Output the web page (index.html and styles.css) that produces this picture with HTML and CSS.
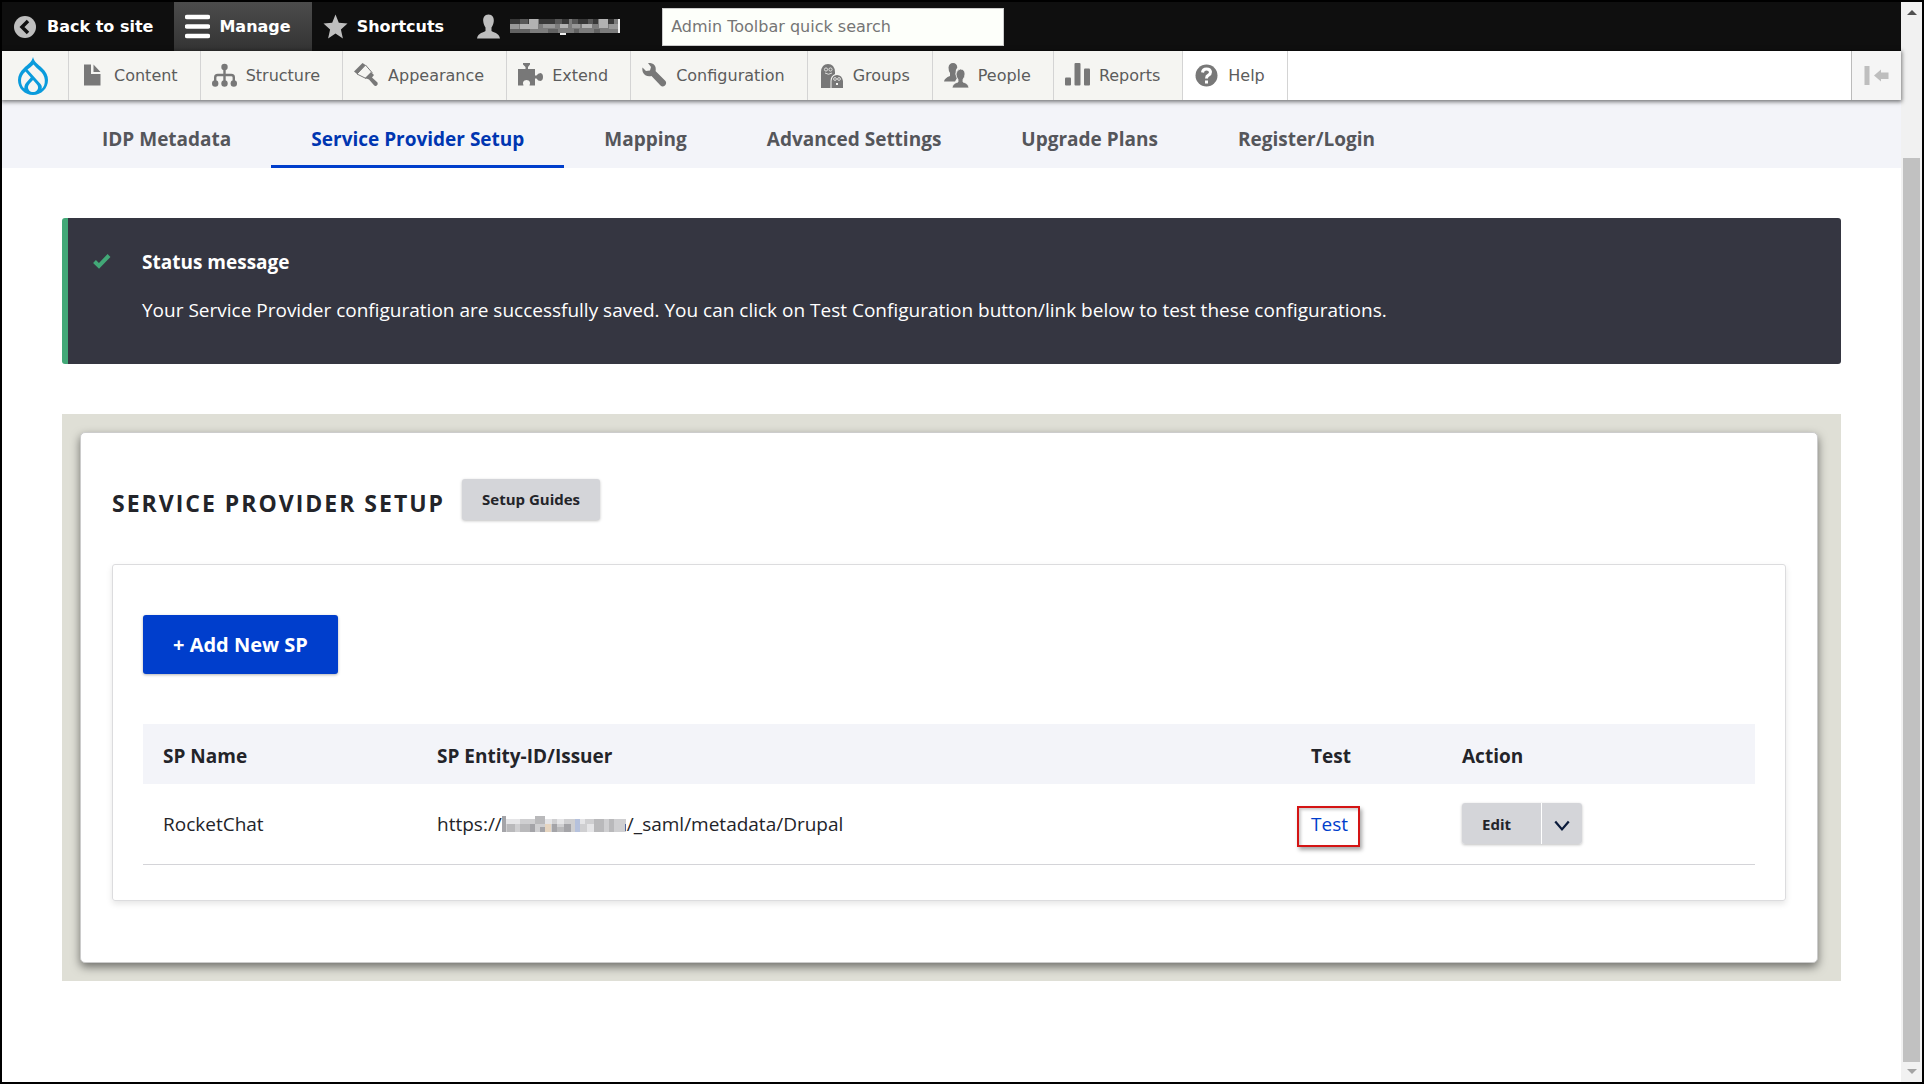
FILE: index.html
```html
<!DOCTYPE html>
<html lang="en">
<head>
<meta charset="utf-8">
<title>Service Provider Setup</title>
<link rel="stylesheet" href="styles.css">
</head>
<body>
<div class="page">
  <nav class="bar" aria-label="Toolbar">
    <a class="item" href="#"><svg class="icon" viewBox="0 0 25 25"><circle cx="12" cy="13" r="11" fill="#bebebe"/><path d="M15 7l-6 6 6 6" fill="none" stroke="#0f0f0f" stroke-width="3.5"/></svg>Back to site</a>
    <a class="item item-active" href="#"><svg class="icon" viewBox="0 0 25 25"><path d="M2 3h21M2 12.500h21M2 22h21" stroke="#fff" stroke-width="4.500" stroke-linecap="round"/></svg>Manage</a>
    <a class="item" href="#"><svg class="icon" viewBox="0 0 25 25"><path d="M12.500.500l3.300 8.300 8.700.600-6.600 6 2 9-7.400-4.800-7.400 4.800 2-9-6.600-6 8.700-.600z" fill="#bebebe"/></svg>Shortcuts</a>
    <a class="item" href="#" aria-label="Account"><svg class="icon" viewBox="0 0 25 25"><path d="M12.500 0.500c4 0 5.500 3 5.300 6.500-.200 3-1.300 5-2.300 6.500v3.500c1.500 1.500 7.500 1.500 8.500 7.500H1c1-6 7-6 8.500-7.500v-3.500c-1-1.500-2.100-3.500-2.300-6.500-.200-3.500 1.300-6.500 5.300-6.500z" fill="#bebebe"/></svg>
      <svg class="mask-user" viewBox="0 0 110 16" shape-rendering="crispEdges">
        <path d="M0 0h110v14H0z" fill="#7c7c7c"/>
        <path d="M0 0h20v5H0zM29 0h16v5H29zM52 0h7v5h-7zM68 0h20v5H68zM98 0h6v5h-6z" fill="#383838"/>
        <path d="M10 0h8v5h-8zM45 0h7v5h-7zM62 0h6v5h-6zM78 0h5v5h-5z" fill="#585858"/>
        <path d="M19 0h9v5h-9zM89 0h9v9h-9zM10 5h18v5H10zM50 5h8v4h-8zM72 5h10v4H72z" fill="#b2b2b2"/>
        <path d="M0 5h9v5H0zM33 5h12v4H33zM62 5h8v4h-8zM99 5h9v5h-9z" fill="#989898"/>
        <path d="M0 10h20v4H0zM38 10h10v4H38zM64 10h5v4h-5zM84 10h6v4h-6z" fill="#626262"/>
        <path d="M108 0h2v14h-2zM50 14h6v2h-6z" fill="#eee"/>
      </svg></a>
    <input class="search" type="search" aria-label="Admin Toolbar quick search" placeholder="Admin Toolbar quick search">
  </nav>
  <nav class="tray" aria-label="Administration menu">
    <a class="home" href="#" aria-label="Home"><svg class="drop" viewBox="0 0 30 38"><path d="M15 0C14 5 9 8 6 11 2 14.500 0 18.500 0 23c0 8.300 6.700 15 15 15s15-6.700 15-15c0-4.500-2-8.500-6-12-3-3-8-6-9-11z" fill="#0a9bdc"/><path d="M15.500 7.500c-2 2-4 3.500-6 5L22.500 27c1.500 2 1.500 3 1 5 2.500-2 3.500-5 3.300-9-.200-4-2.300-7-5-9.300-2.300-2-4.500-4-6.300-6.200zM7.500 14.500c-3 2.500-4.500 5.500-4.500 9 0 3.500 1 6 3.300 8 0-3.500 1-5 3-7l3.500-4zM15 23l-3.300 3.500c-2 2-2.400 5-.500 7 2 2 5.600 2 7.600 0 2-2 1.600-4.500-.300-6.500z" fill="#f5f5f2"/></svg></a>
    <a class="item" href="#"><svg class="icon" viewBox="0 0 25 25"><path d="M4 1.500h7V11h9.500v11.500H4zM13.500 1.500l7 7.500h-7z"/></svg>Content</a>
    <a class="item" href="#"><svg class="icon" viewBox="0 0 25 25"><circle cx="12.500" cy="4" r="3.200"/><circle cx="3.200" cy="20.500" r="3.200"/><circle cx="12.500" cy="20.500" r="3.200"/><circle cx="21.800" cy="20.500" r="3.200"/><path d="M12.500 4v16M3.200 20v-5.500q0-2.500 2.500-2.500h13.600q2.500 0 2.500 2.500V20" fill="none" stroke="#787878" stroke-width="2.400"/></svg>Structure</a>
    <a class="item" href="#"><svg class="icon" viewBox="0 0 25 25"><path d="M0 8.500L8.500 0l3 2L3 11z"/><path d="M3 11L11.500 2 18 9.500 12 15.500z" fill="none" stroke="#787878"/><path d="M11 15l6-6 3 3-2 2.500 5.500 5q1 2-1 3.200-1.500.800-2.500-.500L15 16.500z"/></svg>Appearance</a>
    <a class="item" href="#"><svg class="icon" viewBox="0 0 25 25"><path d="M0 6h7.500V4L5 1.500V0h7v1.500L10 4v2h7v6.500h1.500Q20 10 22.500 10q2.500.500 2.500 4t-2.500 4Q20 18 18.500 15.500H17v7h-5.500q2-5-3-5.500-5 .500-3 5.500H0z"/></svg>Extend</a>
    <a class="item" href="#"><svg class="icon" viewBox="0 0 25 25"><path d="M6 0q6-.500 7.500 4 .500 3 0 4L23.500 18q1.500 2.500-.500 4.500-2.500 1.800-4.500 0L9.500 13Q3 14 1 9.500 0 7 .500 4.500L4 8l4-.500L9 4z"/></svg>Configuration</a>
    <a class="item" href="#"><svg class="icon" viewBox="0 0 25 25"><path d="M2 25V9Q2.500 1 9 1t7 8v2q-4.500 2-4.500 7v7zM12.500 25v-7q.500-6 5.500-6t6 6v7z"/><g fill="none" stroke="#f5f5f2" stroke-width=".8"><circle cx="7" cy="6.500" r="1.600"/><circle cx="11.500" cy="6.500" r="1.600"/><circle cx="16" cy="16" r="1.400"/><circle cx="20" cy="16" r="1.400"/><path d="M6 10q3.500 2.500 7 0"/></g><path d="M17 20h2v2h-2z" fill="#f5f5f2"/></svg>Groups</a>
    <a class="item" href="#"><svg class="icon" viewBox="0 0 25 25"><path d="M9 0q4 0 4.300 4.500Q11 7 11.500 11l1.500 4-2 3.500H0q.500-3.500 6-5.500v-3Q4.500 8 4.500 4.500 5 0 9 0z"/><path d="M16.500 6q4.500.500 4.500 5 0 3-2 5.500V19q5.500 1.500 6 6H8q.500-4.500 6-6v-2.500Q12 14 12 11q.500-4.500 4.500-5z" stroke="#f5f5f2" stroke-width=".8"/></svg>People</a>
    <a class="item" href="#"><svg class="icon" viewBox="0 0 25 25"><rect y="14.500" width="6" height="8" rx="1"/><rect x="9.500" width="6" height="22.500" rx="1"/><rect x="19" y="5.500" width="6" height="17" rx="1"/></svg>Reports</a>
    <a class="item item-plain" href="#"><svg class="icon" viewBox="0 0 25 25"><circle cx="12.500" cy="12.500" r="11"/><path d="M8.500 9.500q.300-3.500 4-3.500t4 3q0 2-2 3.200-2 1-2 3.300M12.500 17.500v3" fill="none" stroke="#fff" stroke-width="3"/></svg>Help</a>
    <button class="toggle" type="button" aria-label="Vertical orientation"><svg class="icon" viewBox="0 0 25 25"><path d="M.500 3h5v19h-5zM10 12.500l7-6v3h7.500v6.500H17v2.500z" fill="#bebebe"/></svg></button>
  </nav>
  <nav class="tabs" aria-label="Primary tabs">
    <a class="tab" href="#">IDP Metadata</a>
    <a class="tab tab-active" href="#" aria-current="page">Service Provider Setup</a>
    <a class="tab" href="#">Mapping</a>
    <a class="tab" href="#">Advanced Settings</a>
    <a class="tab" href="#">Upgrade Plans</a>
    <a class="tab" href="#">Register/Login</a>
  </nav>
  <main class="content">
    <section class="message" role="status">
      <svg class="check" viewBox="0 0 18 18"><path d="M1.500 9.500l4.500 4.500L16 3.500" fill="none" stroke="#42a877" stroke-width="4"/></svg>
      <div class="message-body">
        <h2 class="message-title">Status message</h2>
        <p class="message-text">Your Service Provider configuration are successfully saved. You can click on Test Configuration button/link below to test these configurations.</p>
      </div>
    </section>
    <div class="backdrop">
      <section class="card">
        <header class="card-head">
          <h1 class="card-title">SERVICE PROVIDER SETUP</h1>
          <button class="btn" type="button">Setup Guides</button>
        </header>
        <div class="panel">
          <button class="btn-primary" type="button">+ Add New SP</button>
          <table class="table">
            <thead><tr><th class="col-name">SP Name</th><th>SP Entity-ID/Issuer</th><th class="col-test">Test</th><th class="col-action">Action</th></tr></thead>
            <tbody><tr>
              <td>RocketChat</td>
              <td>https://<svg class="mask-host" viewBox="0 0 125 18" shape-rendering="crispEdges">
                <path d="M0 3h124v13H0z" fill="#cfcfd1"/>
                <path d="M0 0h4v16H0zM28 8h5v8h-5zM38 11h5v5h-5zM50 8h5v8h-5zM62 8h7v8h-7z" fill="#a4a4a8"/>
                <path d="M5 8h8v8H5zM18 8h10v8H18zM33 0h10v8H33zM55 11h7v5h-7zM92 3h10v13H92zM107 3h5v13h-5z" fill="#b9b9bb"/>
                <path d="M43 3h7v5h-7zM4 3h14v5H4zM55 3h7v5h-7zM85 8h7v8h-7zM78 3h5v5h-5z" fill="#e5e5e7"/>
                <path d="M43 8h6v8h-6z" fill="#e6d5c0"/><path d="M73 3h5v13h-5z" fill="#b5c1dc"/><path d="M123 8h1v7h-1z" fill="#50659a"/>
              </svg>/_saml/metadata/Drupal</td>
              <td><a class="test-link" href="#">Test</a></td>
              <td><div class="split"><button class="split-main" type="button">Edit</button><button class="split-more" type="button" aria-label="More actions"><svg class="chevron" viewBox="0 0 16 16"><path d="M2 4l6 7 6-7" fill="none" stroke="#0b1b3b" stroke-width="2"/></svg></button></div></td>
            </tr></tbody>
          </table>
        </div>
      </section>
    </div>
  </main>
</div>
<div class="scroll" aria-hidden="true"><span class="arrow arrow-up"></span><span class="thumb"></span><span class="arrow arrow-down"></span></div>
</body>
</html>
```
FILE: styles.css
```css
* { box-sizing: border-box; }
body {
  margin: 0;
  min-height: 100vh;
  display: flex;
  border: 2px solid #000;
  background: #fff;
  color: #232429;
  font: 19px/26px "Open Sans", "Noto Sans", sans-serif;
}
h1, h2, p { margin: 0; }
a { color: inherit; text-decoration: none; }
button { font: inherit; color: inherit; border: 0; padding: 0; cursor: pointer; }
.page { flex: 1; min-width: 0; }

/* Admin toolbar */
.bar, .tray {
  display: flex;
  font: 16px/20px "DejaVu Sans", Verdana, sans-serif;
}
.bar { height: 49px; align-items: center; background: #0f0f0f; color: #fff; font-weight: 700; }
.item { display: flex; align-items: center; gap: 9px; height: 49px; padding: 0 22px 0 11px; }
.bar .item { padding-right: 21px; }
.item-active { background: linear-gradient(#4c4c4c, #333); }
.icon { width: 25px; height: 25px; flex: none; }
.mask-user { width: 110px; height: 16px; }
.search {
  width: 342px;
  height: 38px;
  margin-left: 21px;
  padding: 0 8px;
  border: 1px solid #ccc;
  background: #fdfffa;
  font: 16px/20px "DejaVu Sans", Verdana, sans-serif;
}
.search::placeholder { color: #757575; opacity: 1; }
.tray {
  position: relative;
  height: 49px;
  background: #fff;
  color: #5c5c5c;
  fill: #787878;
  box-shadow: 0 1px 4px 1px rgba(0, 0, 0, .5);
}
.home { display: flex; align-items: center; padding: 0 20px 0 16px; }
.drop { width: 30px; height: 38px; }
.home, .tray .item { background: #f5f5f2; border-right: 1px solid #d4d4d4; }
.tray .item-plain { background: #fff; }
.toggle { margin-left: auto; padding: 0 12px; background: #f5f5f5; border-left: 1px solid #bbb; display: flex; align-items: center; }

/* Primary tabs */
.tabs { display: flex; padding: 0 60px; background: #f3f4f9; }
.tab { padding: 26px 40px 13px; border-bottom: 3px solid transparent; color: #55565b; font-weight: 700; }
.tab-active { color: #0036b1; border-color: #003ecc; }

/* Content */
.content { display: grid; gap: 50px; padding: 50px 60px 100px; }
.message {
  display: flex;
  gap: 31px;
  padding: 31px 25px 41px;
  border-left: 6px solid #42a877;
  border-radius: 3px;
  background: #353641;
  color: #fff;
}
.check { width: 18px; height: 24px; flex: none; }
.message-body { display: grid; gap: 22px; }
.message-title { font-size: 19px; line-height: 26px; }
.backdrop { padding: 18px 23px 18px 18px; background: #dfdfd6; }
.card {
  padding: 46px 31px 61px;
  border: 1px solid #ccc;
  border-radius: 5px;
  background: #fff;
  box-shadow: 0 4px 10px rgba(0, 0, 0, .5);
}
.card-head { display: flex; align-items: flex-end; gap: 17px; margin-bottom: 44px; }
.card-title { font-size: 23px; line-height: 34px; letter-spacing: 2px; }
.btn, .split-main, .split-more {
  height: 41px;
  border-radius: 3px;
  background: #d4d5d9;
  box-shadow: 0 1px 3px rgba(0, 0, 0, .25);
  font-size: 15px;
  font-weight: 700;
}
.btn { padding: 0 20px 2px; }
.panel {
  padding: 50px 30px 35px;
  border: 1px solid #dcdcde;
  border-radius: 3px;
  box-shadow: 0 3px 6px rgba(0, 0, 0, .1);
}
.btn-primary {
  height: 59px;
  padding: 0 30px;
  border-radius: 3px;
  background: #003ecc;
  color: #fff;
  font-size: 20px;
  font-weight: 700;
  box-shadow: 0 1px 3px rgba(0, 0, 0, .3);
  display: block;
}
.table { width: 100%; margin-top: 50px; table-layout: fixed; border-collapse: collapse; text-align: left; }
.table th { padding: 19px 20px 15px; background: #f3f4f9; }
.table td { height: 80px; padding: 0 20px; border-bottom: 1px solid #d4d4d8; }
.col-name { width: 17%; }
.col-test { width: 151px; }
.col-action { width: 313px; }
.mask-host { width: 125px; height: 18px; vertical-align: -3px; }
.test-link { position: relative; color: #003ecc; }
.test-link::after {
  content: "";
  position: absolute;
  inset: -5px -12px -10px -14px;
  border: 2px solid #d41414;
  box-shadow: 2px 3px 4px rgba(0, 0, 0, .35), inset 2px 2px 3px rgba(0, 0, 0, .2);
}
.split { display: flex; width: 120px; border-radius: 3px; box-shadow: 0 1px 3px rgba(0, 0, 0, .25); }
.split-main, .split-more { box-shadow: none; }
.split-main { flex: 1; padding-right: 10px; border-right: 1px solid #fff; border-radius: 3px 0 0 3px; }
.split-more { width: 40px; border-radius: 0 3px 3px 0; }
.chevron { width: 18px; height: 18px; vertical-align: middle; }

/* Scroll track */
.scroll { width: 21px; display: flex; flex-direction: column; align-items: center; background: #f1f1f1; padding: 8px 2px; }
.thumb { flex: 1; width: 17px; margin: 143px 0 7px; background: #c1c1c1; }
.arrow { border: 5px solid transparent; border-top: 0; border-bottom-color: #505050; }
.arrow-down { border-top: 5px solid #a3a3a3; border-bottom: 0; }
```
